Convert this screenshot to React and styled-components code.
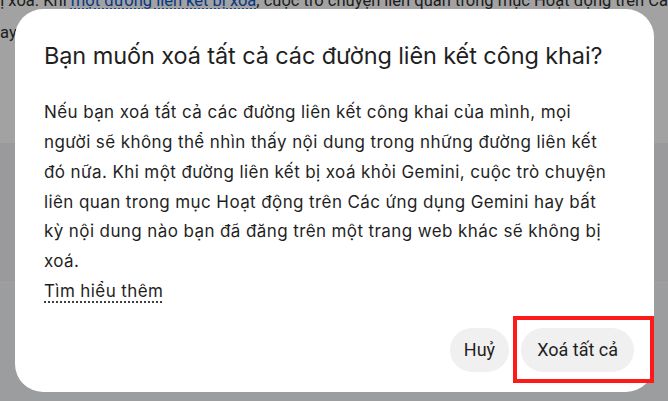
import React from 'react'
import styled, { createGlobalStyle } from 'styled-components'

const GlobalStyle = createGlobalStyle`
  html, body {
    margin: 0;
    padding: 0;
    overflow: hidden;
    background: #ffffff;
  }
  body {
    font-family: Roboto, "Liberation Sans", sans-serif;
  }
`

const Page = styled.div`
  width: 668px;
  height: 401px;
  overflow: hidden;
  display: flex;
  flex-direction: column;
`

const Paragraph = styled.p`
  margin: -15px 0 0 -9px;
  font-size: 16.5px;
  line-height: 32px;
  color: #2e2e2e;
  white-space: nowrap;
`

const PageLink = styled.a`
  color: #0b57d0;
  text-decoration: underline dotted;
  text-underline-offset: 3px;
`

const Section = styled.div`
  flex: ${p => (p.$grow ? 1 : 'none')};
  height: ${p => p.$height}px;
  background: ${p => p.$bg};
  border-top: ${p => (p.$line ? '1px solid #ffffff' : 'none')};
`

const Scrim = styled.div`
  position: fixed;
  inset: 0;
  background: rgba(0, 0, 0, 0.365);
  display: flex;
  align-items: center;
  justify-content: center;
`

const Dialog = styled.div`
  width: 639px;
  box-sizing: border-box;
  margin-left: 1px;
  padding: 31px 20px 20px 29px;
  background: #ffffff;
  border-radius: 28px;
  color: #1f1f1f;
  font-family: Inter, "Open Sans", sans-serif;
`

const Title = styled.h2`
  margin: 0;
  font-size: 23.5px;
  font-weight: 400;
  line-height: 32px;
  letter-spacing: -0.1px;
`

const Body = styled.div`
  margin-top: 26px;
  max-width: 574px;
  font-size: 17px;
  line-height: 29.75px;
  letter-spacing: 0.4px;
`

const LearnMore = styled.a`
  color: #1f1f1f;
  text-decoration: underline dotted;
  text-underline-offset: 5px;
`

const Actions = styled.div`
  margin-top: 21px;
  display: flex;
  justify-content: flex-end;
  gap: 12px;
`

const Button = styled.button`
  position: relative;
  height: 44px;
  padding: 0 ${p => p.$pad}px;
  border: none;
  border-radius: 22px;
  background: #f0f0f0;
  color: #1f1f1f;
  font-family: Roboto, "Liberation Sans", sans-serif;
  font-size: 18px;
`

const Highlight = styled.span`
  position: absolute;
  top: -12px;
  bottom: -11px;
  left: -8px;
  right: -20px;
  border: 4px solid #ff1a1a;
  pointer-events: none;
`

export default function App() {
  return (
    <>
      <GlobalStyle />
      <Page>
        <Paragraph>
          bị xoá. Khi <PageLink>một đường liên kết bị xoá</PageLink>, cuộc trò chuyện liên quan trong mục Hoạt động trên Các ứng dụng Gemini
          <br />
          hay kỳ nội dung nào bạn đã đăng trên một trang web khác sẽ không bị xoá. <PageLink>Tìm hiểu thêm</PageLink>
        </Paragraph>
        <Section $height={94} $bg="#ffffff" />
        <Section $height={139} $bg="#f2f3f7" />
        <Section $grow $bg="#f6f7fa" $line />
      </Page>
      <Scrim>
        <Dialog role="dialog">
          <Title>Bạn muốn xoá tất cả các đường liên kết công khai?</Title>
          <Body>
            Nếu bạn xoá tất cả các đường liên kết công khai của mình, mọi người sẽ không thể nhìn thấy nội dung trong những đường liên kết đó nữa. Khi một đường liên kết bị xoá khỏi Gemini, cuộc trò chuyện liên quan trong mục Hoạt động trên Các ứng dụng Gemini hay bất kỳ nội dung nào bạn đã đăng trên một trang web khác sẽ không bị xoá.
            <br />
            <LearnMore>Tìm hiểu thêm</LearnMore>
          </Body>
          <Actions>
            <Button $pad={14}>Huỷ</Button>
            <Button $pad={16}>
              Xoá tất cả
              <Highlight />
            </Button>
          </Actions>
        </Dialog>
      </Scrim>
    </>
  )
}
